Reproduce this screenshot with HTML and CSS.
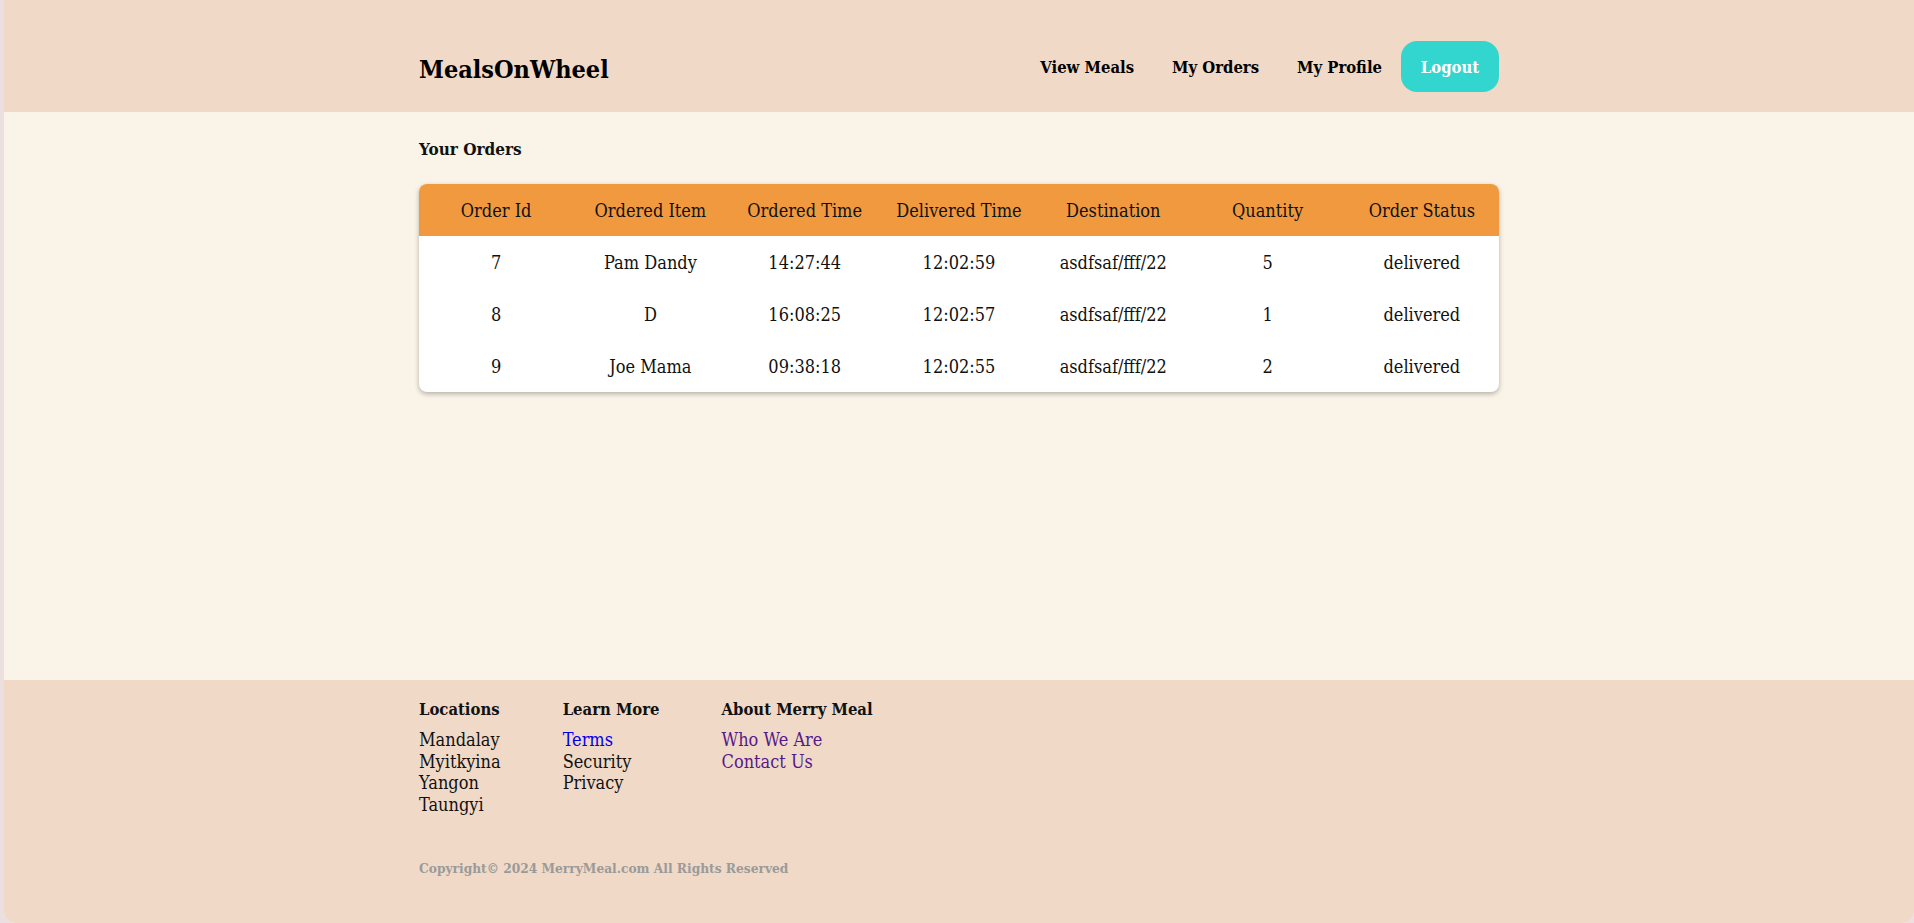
FILE: index.html
```html
<!DOCTYPE html>
<html lang="en">
<head>
<meta charset="utf-8">
<title>MealsOnWheel - Your Orders</title>
<link rel="stylesheet" href="styles.css">
</head>
<body>
<div class="page">
  <header class="site-header">
    <div class="container header-inner">
      <a class="logo" href="#">MealsOnWheel</a>
      <nav class="nav">
        <a class="nav-link" href="#">View Meals</a>
        <a class="nav-link" href="#">My Orders</a>
        <a class="nav-link" href="#">My Profile</a>
        <a class="nav-btn" href="#">Logout</a>
      </nav>
    </div>
  </header>

  <main class="main">
    <div class="container">
      <h2 class="page-title">Your Orders</h2>
      <div class="table-card">
        <table class="orders">
          <thead>
            <tr>
              <th>Order Id</th>
              <th>Ordered Item</th>
              <th>Ordered Time</th>
              <th>Delivered Time</th>
              <th>Destination</th>
              <th>Quantity</th>
              <th>Order Status</th>
            </tr>
          </thead>
          <tbody>
            <tr>
              <td>7</td><td>Pam Dandy</td><td>14:27:44</td><td>12:02:59</td><td>asdfsaf/fff/22</td><td>5</td><td>delivered</td>
            </tr>
            <tr>
              <td>8</td><td>D</td><td>16:08:25</td><td>12:02:57</td><td>asdfsaf/fff/22</td><td>1</td><td>delivered</td>
            </tr>
            <tr>
              <td>9</td><td>Joe Mama</td><td>09:38:18</td><td>12:02:55</td><td>asdfsaf/fff/22</td><td>2</td><td>delivered</td>
            </tr>
          </tbody>
        </table>
      </div>
    </div>
  </main>

  <footer class="site-footer">
    <div class="container">
      <div class="footer-cols">
        <div class="footer-col">
          <h3 class="footer-title">Locations</h3>
          <span class="footer-item">Mandalay</span>
          <span class="footer-item">Myitkyina</span>
          <span class="footer-item">Yangon</span>
          <span class="footer-item">Taungyi</span>
        </div>
        <div class="footer-col">
          <h3 class="footer-title">Learn More</h3>
          <a class="footer-item link-new" href="#">Terms</a>
          <span class="footer-item">Security</span>
          <span class="footer-item">Privacy</span>
        </div>
        <div class="footer-col">
          <h3 class="footer-title">About Merry Meal</h3>
          <a class="footer-item link-visited" href="#">Who We Are</a>
          <a class="footer-item link-visited" href="#">Contact Us</a>
        </div>
      </div>
      <p class="copyright">Copyright© 2024 MerryMeal.com All Rights Reserved</p>
    </div>
  </footer>
</div>
</body>
</html>
```

FILE: styles.css
```css
* {
  box-sizing: border-box;
}

html, body {
  margin: 0;
  padding: 0;
  background: #ecdfe0;
}

body {
  font-family: "DejaVu Serif Condensed", "DejaVu Serif", serif;
  color: #111;
}

.page {
  margin-left: 4px;
  min-height: 923px;
  display: flex;
  flex-direction: column;
  background: #faf3e7;
  border-bottom-left-radius: 12px;
  border-bottom-right-radius: 12px;
  overflow: hidden;
}

.container {
  width: 1080px;
  margin: 0 auto;
}

/* Header */
.site-header {
  background: #f0d9c6;
  height: 112px;
  padding-top: 41px;
}

.header-inner {
  display: flex;
  justify-content: space-between;
  align-items: center;
  height: 51px;
}

.logo {
  font-size: 25px;
  font-weight: bold;
  color: #000;
  text-decoration: none;
  padding-top: 6px;
}

.nav {
  display: flex;
  align-items: center;
}

.nav-link {
  color: #000;
  text-decoration: none;
  font-weight: bold;
  font-size: 16.5px;
  padding: 2px 19px 0;
}

.nav-btn {
  display: flex;
  align-items: center;
  justify-content: center;
  height: 51px;
  width: 98px;
  background: #33d6cf;
  color: #fff;
  font-weight: bold;
  font-size: 16.5px;
  text-decoration: none;
  border-radius: 16px;
  padding-top: 2px;
}

/* Main */
.main {
  flex: 1;
  background: #faf3e7;
}

.page-title {
  margin: 0;
  padding-top: 27px;
  font-size: 17px;
  font-weight: bold;
  line-height: 20px;
}

.table-card {
  margin-top: 25px;
  background: #fff;
  border-radius: 8px;
  overflow: hidden;
  box-shadow: 0 2px 5px rgba(0, 0, 0, 0.28);
}

.orders {
  width: 100%;
  border-collapse: collapse;
  table-layout: fixed;
}

.orders th,
.orders td {
  height: 52px;
  padding: 0;
  text-align: center;
  font-size: 18px;
  font-weight: normal;
  color: #111;
}

.orders thead th {
  background: #f0993f;
}

/* Footer */
.site-footer {
  background: #f0d9c6;
  height: 243px;
  padding-top: 19px;
}

.footer-cols {
  display: flex;
  gap: 62px;
}

.footer-col {
  display: flex;
  flex-direction: column;
}

.footer-title {
  margin: 0 0 8px;
  font-size: 16.5px;
  font-weight: bold;
  line-height: 22px;
}

.footer-item {
  font-size: 18px;
  line-height: 21.5px;
  color: #111;
  text-decoration: none;
}

.link-new {
  color: #0000ee;
}

.link-visited {
  color: #551a8b;
}

.copyright {
  margin: 45px 0 0;
  font-size: 13.6px;
  font-weight: bold;
  color: #9a9a9a;
}
```
